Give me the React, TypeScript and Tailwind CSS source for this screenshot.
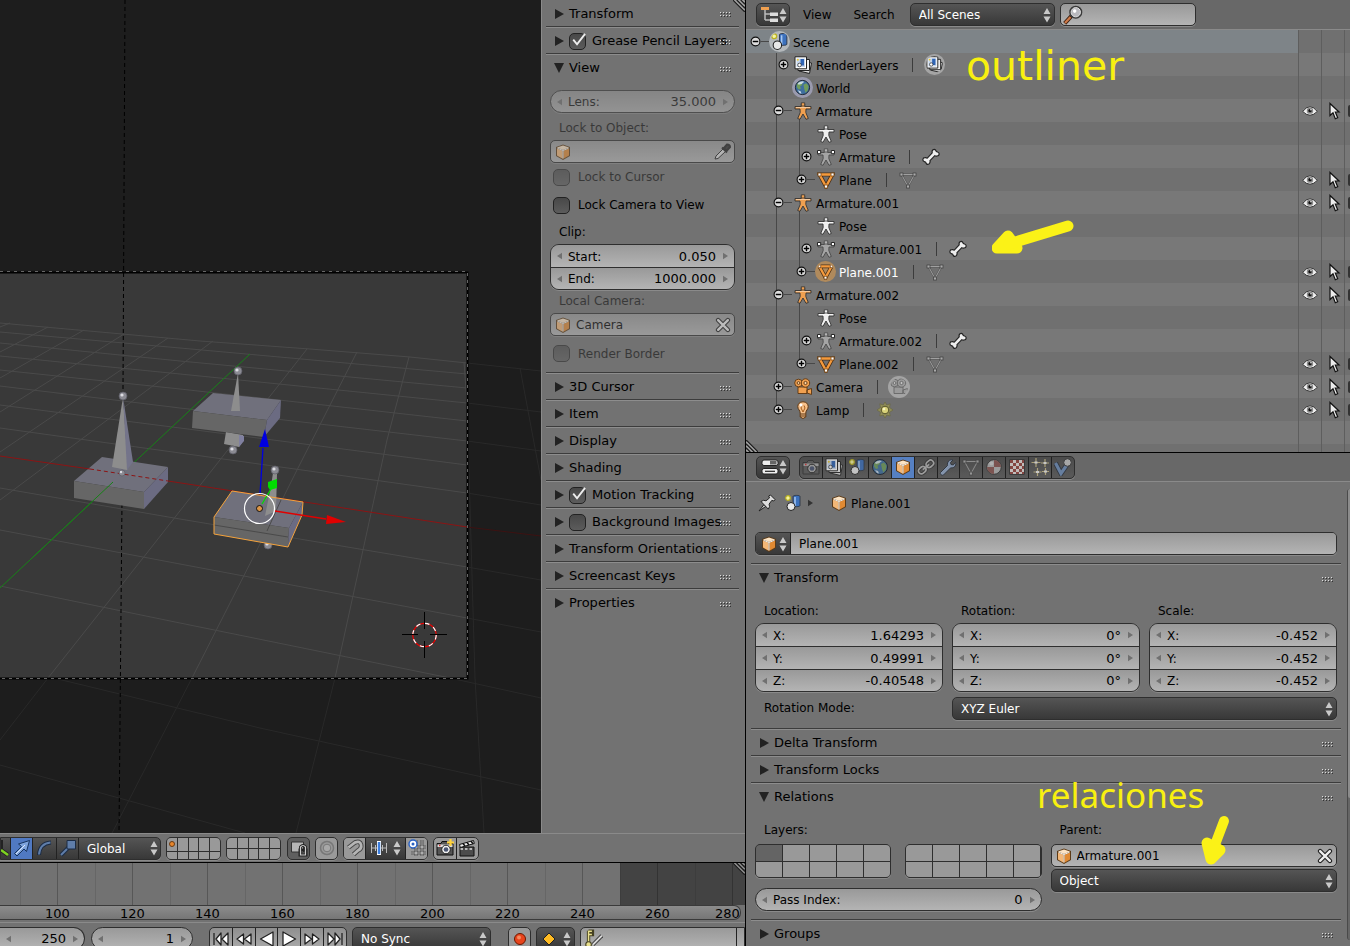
import type { ReactNode } from "react";
import clsx from "clsx";

/* ---------- icons ---------- */

const Icon = ({ children, className = "w-[18px] h-[18px]" }: { children: ReactNode; className?: string }) => (
  <svg viewBox="0 0 18 18" className={clsx("shrink-0", className)} aria-hidden="true">
    {children}
  </svg>
);

const Cube = () => (
  <Icon>
    <path d="M9 1.500 16 4v9l-7 4-7-4V4z" fill="#5b3a17" />
    <path d="M9 2.500 15 4.600 9 7 3 4.600z" fill="#fbe3c4" />
    <path d="M3 5.400 8.600 7.800v8L3 12.600z" fill="#f3b777" />
    <path d="M15 5.400 9.400 7.800v8l5.600-3.200z" fill="#e08a33" />
    <path d="M3.400 5.200 9 7.500l5.600-2.300M9 7.500v8" fill="none" stroke="#fff" strokeWidth=".9" />
  </Icon>
);

const SceneIcon = ({ halo }: { halo?: boolean }) => (
  <Icon className={halo ? "w-[21px] h-[21px] rounded-full bg-[#b4b8bb] p-[1px]" : "w-[18px] h-[18px]"}>
    <path d="M9 2.500c0-1.500 7-1.500 7 0v9c0 1.500-7 1.500-7 0z" fill="#3c71bd" stroke="#26303f" strokeWidth=".8" />
    <path d="M11 3v9" stroke="#a8c8f2" strokeWidth="1.500" />
    <circle cx="7" cy="12.500" r="4" fill="#e8e8e8" stroke="#222" />
    <circle cx="4" cy="4" r="2.300" fill="#f5f3a0" stroke="#b9b11f" strokeWidth="1.200" />
  </Icon>
);

const LayersIcon = ({ halo }: { halo?: boolean }) => (
  <Icon className={halo ? "w-[21px] h-[21px] rounded-full bg-[#a5a5a5] p-[2px]" : "w-[18px] h-[18px]"}>
    <path d="m7 5 10.500 2-2 10.500L5 15z" fill="#d9d9d9" stroke="#222" />
    <path d="M4 3.500h11.500v11H4z" fill="#eee" stroke="#222" />
    <path d="M1 .8h11.500v12H1z" fill="#fff" stroke="#222" />
    <path d="M2.500 2.500h8.500v8.500H2.500z" fill="#c6d6ec" />
    <path d="M6.500 3H10v6.500H6.500z" fill="#2f64b5" />
    <circle cx="5.500" cy="9" r="1.800" fill="#fff" stroke="#222" strokeWidth=".7" />
    <circle cx="3.800" cy="3.800" r="1" fill="#ecc82c" />
  </Icon>
);

const WorldIcon = ({ halo }: { halo?: boolean }) => (
  <Icon className={halo ? "w-[21px] h-[21px] rounded-full bg-[#9a9aae] p-[2px]" : "w-[18px] h-[18px]"}>
    <circle cx="9" cy="9" r="7.500" fill="#3f6f9f" stroke="#16202c" />
    <path d="M3 5.500 6 3l3 .8-.5 2.700-2 1.200.8 2.500-2.300.8L3 8.500zM10 6l3-1.500 2.500 3-.8 4.500-2.400 2.500L11 11z" fill="#6f9c5c" />
    <path d="M4 4.500Q7.500 1.500 11 3l-3 2.300-3.200.8zM4 12l3 1 1 2.500-2-.5z" fill="#dbe8f3" opacity=".85" />
  </Icon>
);

const figure = "M7.300 2h3.400v2.500H17v2.500h-5L11.800 10.500l2.500 6-2.300.8L9 12l-3 5.300-2.300-.8 2.500-6L6 7H1V4.500h6.300z";
const Man = ({ color = "#f0a050" }: { color?: string }) => (
  <Icon>
    <path d={figure} fill={color} stroke="#333" strokeWidth=".9" />
    <path d="M7.300.8h3.400V4H7.300z" fill={color} stroke="#333" strokeWidth=".8" />
    <path d="M2 5.400h14" stroke="#fff" strokeWidth=".8" opacity=".6" />
  </Icon>
);
const Rig = () => (
  <Icon>
    <path d={figure} fill="#a4a4a4" stroke="#4a4a4a" strokeWidth=".9" />
    <path d="M7.300.8h3.400V4H7.300z" fill="#b5b5b5" stroke="#4a4a4a" strokeWidth=".8" />
    <path d="M.5 2.500h3.200v3.200H.5zM14.300 2.500h3.200v3.200h-3.200z" fill="#fff" stroke="#222" />
  </Icon>
);

const Mesh = ({ tone = "orange" }: { tone?: "orange" | "active" | "grey" }) => {
  const grey = tone === "grey";
  return (
    <Icon className={tone === "active" ? "w-[21px] h-[21px] rounded-full bg-[#b08a5c] p-[2px]" : "w-[18px] h-[18px]"}>
      <path d="M2.500 3.500h13L9 15.500z" fill="none" stroke={grey ? "#555" : "#4a3018"} strokeWidth={grey ? 2 : 4} />
      <path d="M2.500 3.500h13L9 15.500z" fill="none" stroke={grey ? "#a0a0a0" : "#f59a3c"} strokeWidth={grey ? 1 : 2.4} />
      {[[2.5, 3.5], [15.5, 3.5], [9, 15.5]].map(([x, y]) => (
        <rect key={`${x}-${y}`} x={x - 1.5} y={y - 1.5} width="3" height="3" fill={grey ? "#aaa" : "#fff"} stroke={grey ? "#444" : "#7a4a18"} strokeWidth=".8" />
      ))}
    </Icon>
  );
};

const Bone = () => (
  <Icon>
    <path d="M10.200 4.800C9.500 2.300 12 .3 13.500 2c.4 1 .8 1.800 2 2 2.400.6 2.200 3.800-.4 4-1 .2-1.700 0-2.300-.3L8 12.600c.6 2.700-1.800 4.900-3.600 3.200-.3-1.200-.9-1.900-2-2.100-2.300-.7-2-3.900.6-4 .9-.1 1.600.1 2.300.4z" fill="#eee" stroke="#222" strokeWidth="1.200" />
  </Icon>
);

const MovieCam = ({ halo }: { halo?: boolean }) => {
  const fill = halo ? "#9a9a9a" : "#f0a050";
  return (
    <Icon className={halo ? "w-[22px] h-[22px] rounded-full bg-[#a4a4a4] p-[2px]" : "w-[18px] h-[18px]"}>
      <g fill={fill} stroke={halo ? "#666" : "#5c3510"} strokeWidth=".9">
        <path d="M4 9h9v6.500H4zM13 12l4.500-1.500v6L13 15z" />
        <circle cx="4.500" cy="5" r="3.800" />
        <circle cx="11.500" cy="5" r="4.200" />
        <circle cx="11.500" cy="5" r="1.600" fill={halo ? "#c4c4c4" : "#fbd6a8"} />
        <circle cx="4.500" cy="5" r="1.400" fill={halo ? "#c4c4c4" : "#fbd6a8"} />
      </g>
    </Icon>
  );
};

const Bulb = () => (
  <Icon>
    <path d="M9 .8c3.500 0 5.200 2.300 5.200 4.800 0 3-2.400 3.600-2.400 6.400v4L9 17.500 6.200 16v-4c0-2.800-2.400-3.400-2.400-6.400C3.800 3.100 5.500.8 9 .8z" fill="#f6c08a" stroke="#5c3510" />
    <path d="M8 4.500 7 7l2 4 2-4-1-2.500" stroke="#a65c18" fill="none" />
    <path d="M6.500 13h5M6.500 15h5" stroke="#5c3510" strokeWidth="1.200" />
    <circle cx="7" cy="4" r="1.500" fill="#fff" />
  </Icon>
);

const Sun = () => (
  <Icon>
    <path d="m9 1 1.700 3 3.500-1.200L13.500 6.500 17 9l-3.500 2.300.7 3.700-3.500-1L9 17l-1.700-3-3.500 1 .7-3.700L1 9l3.500-2.500-.7-3.700L7.300 4z" fill="#8f8c58" stroke="#66643e" strokeWidth=".6" />
    <circle cx="9" cy="9" r="3.800" fill="#d8d27a" stroke="#55532c" />
    <circle cx="8" cy="8" r="1.300" fill="#f5f2c0" />
  </Icon>
);

const Eye = () => (
  <Icon className="w-[16px] h-[16px]">
    <path d="M.8 9.500Q9-1 17.200 9.500 9 18 .8 9.500z" fill="#f0f0f0" stroke="#222" />
    <circle cx="9" cy="8.600" r="3.600" fill="#8a8a8a" />
    <circle cx="9" cy="8.600" r="1.900" fill="#111" />
    <circle cx="10" cy="7.500" r=".8" fill="#fff" />
  </Icon>
);

const Pointer = () => (
  <Icon>
    <path d="M6 1.500v12l3-2.800 2.300 6 2.400-1-2.400-5.700H15z" fill="#ececec" stroke="#111" strokeWidth="1.200" />
  </Icon>
);

const StillCam = ({ plus }: { plus?: boolean }) => (
  <Icon>
    <path d="M1 4.500h4l1-2h5l1 2h5V16H1z" fill={plus ? "#555" : "#5c5c5c"} stroke={plus ? "#111" : "#333"} />
    <path d="M1.500 5.500h15V8h-15z" fill={plus ? "#ddd" : "#aaa"} />
    <circle cx="10" cy="10.500" r="4.300" fill={plus ? "#eee" : "#aaa"} stroke="#222" />
    <circle cx="10" cy="10.500" r="2.300" fill="#4a5572" />
    <path d="M3 6.500h1.500" stroke="#d33" strokeWidth="1.500" />
    {plus && <path d="M14.500 0v7M11 3.500h7" stroke="#ffd23c" strokeWidth="2.200" />}
  </Icon>
);

const Chain = () => (
  <Icon>
    <g fill="none" transform="rotate(-40 9 9)">
      <g stroke="#333" strokeWidth="3.600"><rect x="0" y="6" width="8" height="6" rx="3" /><rect x="10" y="6" width="8" height="6" rx="3" /></g>
      <g stroke="#b4b4b4" strokeWidth="1.700"><rect x="0" y="6" width="8" height="6" rx="3" /><rect x="10" y="6" width="8" height="6" rx="3" /><path d="M5 9h8" /></g>
    </g>
  </Icon>
);

const Wrench = () => (
  <Icon>
    <path d="M1.500 14.500 8.500 7.500C7.800 4 10.500 1 14 2l-2.500 2.500.5 2 2.200.4L16.700 4.500c.8 3.500-2 6-5 5.300L4.500 17c-1.500 1-4-1-3-2.500z" fill="#93a8c8" stroke="#28303c" />
  </Icon>
);

const Ball = () => (
  <Icon>
    <circle cx="9" cy="9" r="7.300" fill="#b4b4b4" stroke="#333" />
    <path d="M9 9V2a7 7 0 0 1 7 7zM9 9v7a7 7 0 0 1-7-7z" fill="#8a5550" />
    <circle cx="6.500" cy="5.500" r="2" fill="#ddd" opacity=".7" />
  </Icon>
);

const Checker = () => (
  <Icon>
    <path d="M1.500 1.500h15v15h-15z" fill="#e6dfdc" stroke="#333" />
    <path d="M2 2h3v3H2zM8 2h3v3H8zM14 2h2v3h-2zM5 5h3v3H5zM11 5h3v3h-3zM2 8h3v3H2zM8 8h3v3H8zM14 8h2v3h-2zM5 11h3v3H5zM11 11h3v3h-3zM2 14h3v2H2zM8 14h3v2H8zM14 14h2v2h-2z" fill="#96423c" />
  </Icon>
);

const Sparkles = () => (
  <Icon>
    <path d="M5 0v9M.5 4.500h9M14 1v8M10 5h8M6.500 10v8M2.500 14h8M14.500 10v7M11 13.500h7" stroke="#c8bb86" strokeWidth="1.200" />
    <path d="M3.500 4.500h3M12.500 5h3M5 14h3M13 13.500h3" stroke="#eee" strokeWidth="2" />
  </Icon>
);

const Physics = () => (
  <Icon>
    <path d="M1.500 5 7 15.500 13.500 6" fill="none" stroke="#28303c" strokeWidth="5" />
    <path d="M1.500 5 7 15.500 13.500 6" fill="none" stroke="#6d8cb8" strokeWidth="3.200" />
    <circle cx="13.500" cy="4.500" r="3.800" fill="#c4c4c4" stroke="#333" />
  </Icon>
);

const Pin = () => (
  <Icon>
    <path d="M1 17 6 10.500l2 1.800z" fill="#ccc" stroke="#222" />
    <path d="M3 7.500Q5.500 5.500 8 6.800L11.500 4l-.8-2L12.500 1 17 5.500 15.800 7l-2-.6-2.700 3.700q1.300 2.600-.8 5z" fill="#ddd" stroke="#222" />
  </Icon>
);

const CloseX = () => (
  <Icon className="w-[16px] h-[16px]">
    <path d="m3.500 3.500 11 11m0-11-11 11" stroke="#222" strokeWidth="5" strokeLinecap="round" />
    <path d="m3.500 3.500 11 11m0-11-11 11" stroke="#eee" strokeWidth="2.600" strokeLinecap="round" />
  </Icon>
);

const Dropper = () => (
  <Icon>
    <path d="m2 16 1-3 7-7 2.500 2.500-7.500 7z" fill="#ddd" stroke="#222" />
    <path d="m9 4.500 5 5M11 5l3-3.500q3 0 3 2.500l-3.500 4z" stroke="#222" strokeWidth="2" fill="#333" />
  </Icon>
);

const Magnifier = () => (
  <Icon className="w-[20px] h-[20px]">
    <path d="m1.500 16.500 6-6.500" stroke="#3a1f10" strokeWidth="3.600" />
    <path d="m1.800 16.200 5-5.500" stroke="#d07a48" strokeWidth="2" />
    <circle cx="11.500" cy="6.500" r="5" fill="#b9b9be" stroke="#3a3a3a" strokeWidth="1.800" />
    <circle cx="11.500" cy="6.500" r="4.200" fill="none" stroke="#e4e4e4" strokeWidth=".9" />
    <circle cx="10.500" cy="5.500" r="1.600" fill="#fff" />
  </Icon>
);

const UpDown = () => (
  <svg viewBox="0 0 8 16" className="w-[8px] h-[16px] shrink-0" aria-hidden="true">
    <path d="M4 1 7.500 7h-7zM4 15.500 7.500 9.500h-7z" fill="#c9c9c9" />
  </svg>
);

const Nudge = ({ flip, dark }: { flip?: boolean; dark?: boolean }) => (
  <svg viewBox="0 0 6 8" className="w-[5px] h-[8px] shrink-0" aria-hidden="true">
    <path d={flip ? "M0 0 6 4 0 8z" : "M6 0 0 4l6 4z"} fill={dark ? "#333" : "#707070"} />
  </svg>
);

const Grip = ({ className }: { className?: string }) => (
  <svg viewBox="0 0 12 12" className={clsx("w-[12px] h-[12px]", className)} aria-hidden="true">
    <path d="M0 0 12 12M4 0l8 8M8 0l4 4" stroke="#222" strokeWidth="1.500" />
    <path d="M1.500 0 12 10.500M5.500 0 12 6.500M9.500 0 12 2.500" stroke="#ccc" />
  </svg>
);

/* ---------- form parts ---------- */

const lightFill = "bg-linear-to-b from-[#999] to-[#b4b4b4]";
const darkFill = "bg-linear-to-b from-[#555] to-[#383838] text-white";
const edge = "border border-[#2e2e2e] shadow-[0_1px_0_#8a8a8a]";

type NumProps = { label?: string; value: string; height?: string; className?: string; disabled?: boolean };

const Num = ({ label, value, height = "h-[23px]", className, disabled }: NumProps) => (
  <label className={clsx("flex items-center px-[6px] w-full", height, lightFill, className, disabled && "opacity-50")}>
    <Nudge />
    <span className="ml-[6px] pt-px">{label}</span>
    <input defaultValue={value} disabled={disabled} aria-label={label ? undefined : "Frame"} className="flex-1 min-w-0 w-0 bg-transparent text-right text-[13px] outline-none mr-[7px] pt-px" />
    <Nudge flip />
  </label>
);

const NumStack = ({ rows }: { rows: string[][] }) => (
  <div className={clsx("rounded-[9px] overflow-hidden h-fit", edge)}>
    {rows.map(([label, value], i) => {
      const last = i === rows.length - 1;
      return <Num key={label} label={label} value={value} height={last ? "h-[21px]" : "h-[23px]"} className={last ? "" : "border-b border-[#2e2e2e]"} />;
    })}
  </div>
);

const Select = ({ label, value, className }: { label: string; value: string; className?: string }) => (
  <div className={clsx("flex items-center h-[23px]", darkFill, edge, className)}>
    <select aria-label={label} className="appearance-none bg-transparent outline-none flex-1 min-w-0 h-full pl-[8px] pt-px">
      <option>{value}</option>
    </select>
    <span className="mr-[3px] pointer-events-none"><UpDown /></span>
  </div>
);

const IdField = ({ label, value, disabled, action }: { label: string; value?: string; disabled?: boolean; action: ReactNode }) => (
  <div className={clsx("flex items-center h-[23px] rounded-[5px] px-[3px]", lightFill, edge, disabled && "opacity-60")}>
    <Cube />
    <input aria-label={label} defaultValue={value} disabled={disabled} className="flex-1 min-w-0 bg-transparent outline-none ml-[4px] pt-px" />
    <button aria-label={`${label} action`}>{action}</button>
  </div>
);

const Check = ({ label, checked, disabled, heading, className }: { label: string; checked?: boolean; disabled?: boolean; heading?: boolean; className?: string }) => (
  <label className={clsx("flex items-center whitespace-nowrap", disabled && "opacity-50", className)}>
    <span className="relative w-[17px] h-[17px]">
      <input type="checkbox" defaultChecked={checked} disabled={disabled} className="block appearance-none w-[17px] h-[17px] rounded-[5px] border border-[#222] bg-linear-to-b from-[#484848] to-[#5c5c5c]" />
      {checked && (
        <svg viewBox="0 0 18 18" className="absolute inset-0 pointer-events-none overflow-visible" aria-hidden="true">
          <path d="m4.500 7 4 5L17 1" fill="none" stroke="#eee" strokeWidth="2" />
        </svg>
      )}
    </span>
    <span className={heading ? "ml-[6px]" : "ml-[8px]"}>{label}</span>
  </label>
);

const Dots = () => (
  <svg viewBox="0 0 12 6" className="w-[12px] h-[6px] shrink-0" aria-hidden="true">
    {[0, 3, 6, 9].map((x) => (
      <g key={x}>
        <path d={`M${x} 0h1v1h-1zM${x} 3h1v1h-1z`} fill="#ddd" />
        <path d={`M${x + 1} 1h1v1h-1zM${x + 1} 4h1v1h-1z`} fill="#333" />
      </g>
    ))}
  </svg>
);

type PanelProps = { title: string; open?: boolean; first?: boolean; check?: boolean; children?: ReactNode };

const Panel = ({ title, open, first, check, children }: PanelProps) => (
  <section className={first ? "" : "border-t border-[#3c3c3c]"}>
    <div className={clsx("flex items-center h-[26px] pl-[8px] pr-[7px] pt-px text-[13px]", !first && "border-t border-t-[#8d8d8d]")}>
      <button className="flex items-center flex-none" aria-expanded={!!open} aria-label={check === undefined ? undefined : title}>
        <svg viewBox="0 0 11 10" className="w-[11px] h-[10px] mr-[4px]" aria-hidden="true">
          <path d={open ? "M0 0h10L5 10z" : "M1 0v10l9-5z"} fill="#222" />
        </svg>
        {check === undefined && title}
      </button>
      {check !== undefined && <Check label={title} checked={check} heading />}
      <span className="flex-1" />
      <span className="w-0 flex justify-end pt-[3px]"><Dots /></span>
    </div>
    {children}
  </section>
);

/* ---------- 3D view ---------- */

const gridLines = [
  "M0 323 200 341 310 349 410 357 467 363", "M0 332 180 348 467 374", "M0 343 180 361 467 388", "M0 356 180 374 467 403",
  "M0 370 180 389 467 421", "M0 386 180 408 467 441", "M0 405 180 428 467 465", "M0 428 180 453 467 493",
  "M0 488 180 519 467 567", "M0 530 180 564 467 618", "M0 586 180 623 450 678",
  "M10 323 0 327", "M48 327 0 352", "M84 330 0 378", "M124 334 0 412", "M168 338 0 452", "M213 341 0 500",
  "M307 349 227 451 143 558 48 678", "M357 352 298 468 262 540 192 678", "M409 357 387 440 363 550 335 678", "M464 362 467 403",
];
const outerLines = [
  "M467 363 541 371M467 403l74 9M467 441l74 10M467 493l74 12M467 567l74 13M467 618l74 14M450 678l91 20",
  "M0 665 260 728 541 790M0 765 245 833M192 678 112 833M335 678 296 833M467 403 475 678 484 833M48 678 0 740M520 368 541 480",
];

const Joint = ({ x, y, r = 4 }: { x: number; y: number; r?: number }) => (
  <g>
    <circle cx={x} cy={y} r={r} fill="#8b8b93" stroke="#5c5c66" strokeWidth=".7" />
    <circle cx={x - 1} cy={y - 1} r={r / 2.5} fill="#dcdce2" />
  </g>
);

const Viewport = () => (
  <svg viewBox="0 0 541 833" preserveAspectRatio="xMinYMin slice" className="w-full h-full block" role="img" aria-label="3D view">
    <path d="M0 0h541v833H0z" fill="#1d1d1d" />
    <g fill="none" stroke="#292929">{outerLines.map((d) => <path key={d} d={d} />)}</g>
    <path d="m467 527 74 9" stroke="#3d1212" />
    <path d="M0 272h467v406H0z" fill="#393939" />
    <g fill="none" stroke="#4a4a4a">{gridLines.map((d) => <path key={d} d={d} />)}</g>
    <path d="M250 354 0 588" stroke="#178217" fill="none" />
    <path d="M125 0 123 390 119 833" fill="none" stroke="#000" strokeDasharray="4 3" />
    <path d="M0 272.500h467.500v406H0" fill="none" stroke="#000" strokeWidth="2" />
    <path d="M0 271.500h467.500v407H0" fill="none" stroke="#666" strokeDasharray="3 4" />

    {/* box on the left */}
    <path d="m102 457 66 10-24 25-70-11z" fill="#70707c" />
    <path d="m74 481 70 11v17l-70-11z" fill="#666" />
    <path d="m168 467v15l-24 27v-17z" fill="#6b6b82" />
    <path d="m123 397-11 70 15 3 1-2z" fill="#8d8d8d" />
    <path d="m123 397 10 65-6 8z" fill="#74748a" />
    <path d="M113 482 31 559" stroke="#178217" />
    <Joint x={123} y={396} />
    <path d="M0 456 90 469" stroke="#8c1414" />
    <path d="m90 469 78 12" stroke="#8c1414" strokeDasharray="4 3" />
    <path d="m168 481 299 46" stroke="#8c1414" />
    <Joint x={122} y={473} r={3} />

    {/* box at the back */}
    <path d="m226 432 17 3v6l-4 6-15-3z" fill="#8d8d8d" />
    <path d="m239 435 5 1v5l-5 6z" fill="#8080a0" />
    <Joint x={233} y={450} />
    <path d="m213 393 68 7-14 20-74-9z" fill="#70707c" />
    <path d="m193 411 74 9-3 17-72-9z" fill="#666" />
    <path d="m281 400-1 18-16 19 3-17z" fill="#6b6b82" />
    <path d="m238 373-7 38h9z" fill="#8d8d8d" />
    <Joint x={238} y={371} />

    {/* selected box */}
    <Joint x={268} y={545} />
    <path d="m232 491 71 11-14 26-75-11z" fill="#70707c" />
    <path d="m214 517 75 11-1 19-74-13z" fill="#666" />
    <path d="m303 502-1 13-14 32 1-19z" fill="#6b6b82" />
    <path d="m214 525 74 12M281 500l-14 31" stroke="#4a4a4a" fill="none" />
    <path d="m273 473 4 0-1 38-11 5 6-30z" fill="#8d8d8d" />
    <Joint x={275} y={470} />
    <path d="m232 491 71 11-1 13-14 32-74-13v-17z" fill="none" stroke="#f5a33c" />

    {/* manipulator */}
    <path d="m260 494 3-46" stroke="#0000e0" strokeWidth="1.300" />
    <path d="m265 429-6 18h10z" fill="#0000e0" />
    <path d="m262 504 9-15" stroke="#00dd00" strokeWidth="1.300" />
    <path d="m268 482 9-3v9l-7 2-2-3z" fill="#00dd00" />
    <path d="m275 511 51 8" stroke="#e00000" strokeWidth="1.300" />
    <path d="m327 515 19 7-20 2z" fill="#e00000" />
    <circle cx="259.500" cy="508.500" r="15" fill="none" stroke="#fff" strokeWidth="1.200" />
    <circle cx="259.500" cy="508.500" r="3" fill="#dc9646" stroke="#111" />

    {/* 3D cursor */}
    <circle cx="424.500" cy="635" r="11.700" fill="none" stroke="#e00" strokeWidth="1.200" />
    <circle cx="424.500" cy="635" r="11.700" fill="none" stroke="#fff" strokeWidth="1.200" strokeDasharray="4.600 4.600" />
    <path d="M402 634.500h16M430 634.500h17M424.500 612v17M424.500 641v17" stroke="#000" />
  </svg>
);

const ToolShelf = () => (
  <aside className="relative w-[204px] shrink-0 bg-[#727272] border-l border-[#8a8a8a] pl-[4px] pr-[6px] overflow-hidden">
    <Panel title="Transform" first />
    <Panel title="Grease Pencil Layers" check />
    <Panel title="View" open>
      <div className="px-[4px] pt-[10px] pb-[5px]">
        <Num label="Lens:" value="35.000" disabled className={clsx("rounded-full", edge)} />
        <p className="h-[23px] leading-[23px] mt-[4px] pl-[9px] opacity-50">Lock to Object:</p>
        <IdField label="Lock object" disabled action={<Dropper />} />
        <Check label="Lock to Cursor" disabled className="h-[28px] pl-[3px]" />
        <Check label="Lock Camera to View" className="h-[28px] pl-[3px]" />
        <p className="h-[23px] leading-[23px] mt-[2px] pl-[9px]">Clip:</p>
        <NumStack rows={[["Start:", "0.050"], ["End:", "1000.000"]]} />
        <p className="h-[23px] leading-[23px] pl-[9px] opacity-50">Local Camera:</p>
        <IdField label="Local camera" value="Camera" disabled action={<CloseX />} />
        <Check label="Render Border" disabled className="h-[27px] mt-[4px] pl-[3px]" />
      </div>
    </Panel>
    <Panel title="3D Cursor" />
    <Panel title="Item" />
    <Panel title="Display" />
    <Panel title="Shading" />
    <Panel title="Motion Tracking" check />
    <Panel title="Background Images" check={false} />
    <Panel title="Transform Orientations" />
    <Panel title="Screencast Keys" />
    <Panel title="Properties" />
    <Grip className="absolute top-0 right-0" />
  </aside>
);

const LayerGrid = ({ dot, active, small }: { dot?: boolean; active?: boolean; small?: boolean }) => (
  <div className={clsx("grid grid-cols-5 rounded-[5px] overflow-hidden bg-[#2e2e2e] gap-px", edge, small ? "w-[55px] h-[23px]" : "h-[34px] flex-1")}>
    {Array.from({ length: 10 }, (_, i) => (
      <button key={i} aria-label={`Layer ${i + 1}`} className={clsx("flex items-center justify-center", active && i === 0 ? "bg-[#646464]" : "bg-[#999]")}>
        {dot && i === 0 && <span className="w-[6px] h-[6px] rounded-full bg-[#e8862c] border border-[#6b3a10]" />}
      </button>
    ))}
  </div>
);

const tool = "flex items-center justify-center w-[23px] h-[23px] shrink-0";

const ViewHeader = () => (
  <div className="flex items-center h-[29px] border-t border-[#8a8a8a] bg-[#727272] overflow-hidden">
    <div className={clsx("flex rounded-r-[5px] overflow-hidden shrink-0 w-[161px]", edge, darkFill)}>
      <button aria-label="Manipulator" className="w-[9px] h-[21px] overflow-hidden">
        <svg viewBox="0 0 9 21" className="w-[9px] h-[21px]"><path d="M0 2v10l7 5" fill="none" stroke="#222" strokeWidth="4" /><path d="M0 12l7 5" fill="none" stroke="#7ed321" strokeWidth="2.500" /></svg>
      </button>
      <button aria-label="Translate" className="w-[23px] h-[21px] bg-[#5079c2] border-x border-[#222] flex justify-center items-center">
        <Icon><path d="m1.500 14.500 7-7-3-2.500L16.500 1.500 13.500 12.500 11 10l-7 7z" fill="#7ea3dc" stroke="#16335c" /><path d="m3 15 9-9" stroke="#dbe8fb" /></Icon>
      </button>
      <button aria-label="Rotate" className="w-[23px] h-[21px] flex justify-center items-center">
        <Icon><path d="M3 16Q3.500 4.500 15 3.500" fill="none" stroke="#1c2c44" strokeWidth="4" /><path d="M3 15.500Q4 4.500 14.500 3.500" fill="none" stroke="#5f7da9" strokeWidth="2" /></Icon>
      </button>
      <button aria-label="Scale" className="w-[23px] h-[21px] border-x border-[#222] flex justify-center items-center">
        <Icon><path d="m2 16 8-8" stroke="#1c2c44" strokeWidth="4" /><path d="m2 16 8-8" stroke="#5f7da9" strokeWidth="2" /><path d="M8 1.500h8.500V10H8z" fill="#5f7da9" stroke="#1c2c44" /></Icon>
      </button>
      <div className="flex flex-1 items-center h-[21px]">
        <select aria-label="Orientation" className="appearance-none bg-transparent outline-none flex-1 min-w-0 pl-[8px] pt-px"><option>Global</option></select>
        <span className="mr-[2px] pointer-events-none"><UpDown /></span>
      </div>
    </div>
    <div className="flex gap-[5px] ml-[5px] shrink-0">
      <LayerGrid small dot />
      <LayerGrid small />
    </div>
    <button aria-label="Lock layers" className={clsx(tool, edge, "ml-[6px] rounded-[5px] bg-[#5f5f5f]")}>
      <Icon><path d="M1.500 3h12v10h-12z" fill="#b5b5b5" stroke="#333" /><path d="M10.500 10.500V8q2.500-3 5 0v2.500M10 11h6v5h-6z" fill="none" stroke="#222" strokeWidth="3" /><path d="M10.500 10.500V8q2.500-3 5 0v8h-5z" fill="none" stroke="#ccc" strokeWidth="1.200" /></Icon>
    </button>
    <button aria-label="Proportional editing" className={clsx(tool, edge, "ml-[5px] rounded-[5px] bg-[#999]")}>
      <Icon><circle cx="9" cy="9" r="6.500" fill="none" stroke="#777" strokeWidth="1.500" /><circle cx="9" cy="9" r="3.800" fill="#a8a8a8" stroke="#777" /></Icon>
    </button>
    <div className={clsx("flex ml-[5px] rounded-[5px] overflow-hidden shrink-0 h-[23px] w-[85px]", edge)}>
      <button aria-label="Snap" className="w-[22px] bg-[#999] flex items-center justify-center border-r border-[#222]">
        <Icon><path d="M2.500 8.500 9 3.500q5-2 6 2t-3 6l-4.500 4" fill="none" stroke="#444" strokeWidth="4.600" /><path d="M2.500 8.500 9 3.500q5-2 6 2t-3 6l-4.500 4" fill="none" stroke="#b5b5b5" strokeWidth="2.800" /></Icon>
      </button>
      <button aria-label="Snap element" className={clsx("flex flex-1 items-center justify-between px-[4px]", darkFill)}>
        <Icon><path d="M1 9h16M1.500 4v10M5.500 6v6M12.500 6v6M16.500 4v10" stroke="#bbb" /><path d="M9 2v14" stroke="#fff" strokeWidth="4" /><path d="M9 3v12" stroke="#3b7ddd" strokeWidth="2.500" /></Icon>
        <UpDown />
      </button>
      <button aria-label="Snap target" className="w-[22px] bg-[#999] flex items-center justify-center border-l border-[#222]">
        <Icon><path d="M8 1v16M14 1v16M3 8h15M3 14h15" stroke="#222" strokeWidth="2.600" /><path d="M8 1v16M14 1v16M3 8h15M3 14h15" stroke="#ddd" /><circle cx="5" cy="5" r="4" fill="#fff" stroke="#2a62c4" strokeWidth="1.500" /><circle cx="5" cy="5" r="1.500" fill="#2a62c4" /></Icon>
      </button>
    </div>
    <div className={clsx("flex ml-[5px] rounded-[5px] overflow-hidden h-[23px] w-[46px] shrink-0 bg-[#999]", edge)}>
      <button aria-label="Render" className="flex flex-1 items-center justify-center border-r border-[#222]"><StillCam plus /></button>
      <button aria-label="Render animation" className="flex flex-1 items-center justify-center">
        <Icon><path d="M2 8h14v9H2z" fill="#4c4c4c" stroke="#111" /><path d="m1.500 5.500 14-4 .8 3-14 4z" fill="#eee" stroke="#111" /><path d="m5 4.500 2 2.500M9 3.500 11 6M13 2.300l2 2.500" stroke="#111" strokeWidth="1.500" /><path d="M2.500 10h13" stroke="#ddd" strokeWidth="1.500" strokeDasharray="2.500 2" /></Icon>
      </button>
    </div>
  </div>
);

/* ---------- timeline ---------- */

const frames = [100, 120, 140, 160, 180, 200, 220, 240, 260, 280];
const playIcons = [
  ["Jump to start", "M2 3v12M9 3 4 9l5 6zM16 3l-6 6 6 6z"],
  ["Previous keyframe", "M8.500 4 2 9l6.500 5zM16 4 9.500 9l6.500 5z"],
  ["Play reverse", "M15 2 2.500 9 15 16z"],
  ["Play", "M3 2l12.500 7L3 16z"],
  ["Next keyframe", "M2 4l6.500 5L2 14zM9.500 4 16 9l-6.500 5z"],
  ["Jump to end", "M16 3v12M9 3l5 6-5 6zM2 3l6 6-6 6z"],
];

const Timeline = () => (
  <div className="relative border-t border-black bg-[#727272] overflow-hidden">
    <div className="flex h-[42px] pl-[20px] overflow-hidden">
      {frames.map((f) => (
        <div key={f} className={clsx("flex w-[75px] shrink-0 border-l", f > 240 ? "bg-[#434343] border-[#3d3d3d]" : "border-[#666]")}>
          <div className={clsx("w-[37px] border-r", f > 240 ? "border-[#333]" : "border-[#575757]")} />
        </div>
      ))}
    </div>
    <div className="flex h-[15px] pl-[20px] mr-[4px] border-y border-r border-[#3a3a3a] rounded-r-[7px] bg-linear-to-b from-[#8c8c8c] to-[#767676] text-[13px]">
      {frames.map((f) => (
        <span key={f} className={clsx("shrink-0 text-center leading-[15px]", f === 280 ? "w-[65px]" : "w-[75px]")}>{f}</span>
      ))}
    </div>
    <Grip className="absolute top-0 right-0" />
    <div className="flex mt-[2px] h-[24px] pt-[4px] border-t border-[#8a8a8a] overflow-hidden">
      <Num value="250" className={clsx("max-w-[85px] rounded-r-full border-l-0", edge)} />
      <Num value="1" className={clsx("max-w-[102px] ml-[6px] rounded-full", edge)} />
      <div className={clsx("flex h-[23px] ml-[16px] w-[138px] rounded-[5px] overflow-hidden shrink-0 bg-linear-to-b from-[#8f8f8f] to-[#aaa]", edge)}>
        {playIcons.map(([name, d], i) => (
          <button key={name} aria-label={name} className={clsx("flex flex-1 items-center justify-center", i > 0 && "border-l border-[#222]")}>
            <Icon><path d={d} fill="#fff" stroke="#222" strokeWidth="1.300" strokeLinejoin="round" /></Icon>
          </button>
        ))}
      </div>
      <Select label="Sync mode" value="No Sync" className="ml-[5px] w-[139px] shrink-0 rounded-[5px]" />
      <button aria-label="Record" className={clsx(tool, edge, "ml-[17px] rounded-[5px] bg-[#999]")}>
        <Icon><circle cx="9" cy="9" r="5.500" fill="#e8441c" stroke="#6b1800" /><circle cx="8" cy="7.500" r="2" fill="#f58a60" /></Icon>
      </button>
      <button aria-label="Keyframe type" className={clsx("flex items-center justify-between px-[3px] h-[23px] w-[39px] shrink-0 ml-[5px] rounded-[5px]", darkFill, edge)}>
        <Icon><path d="m9 3 6 6-6 6-6-6z" fill="#ffbb22" stroke="#222" /></Icon>
        <UpDown />
      </button>
      <div className={clsx("flex items-center h-[23px] flex-1 min-w-0 ml-[5px] rounded-l-[5px]", lightFill, edge)}>
        <Icon className="w-[20px] h-[20px] ml-[2px]">
          <path d="M5 1.500v10M5 2h3.500v3H5" fill="none" stroke="#444022" strokeWidth="3" /><path d="M5 1.500v10M5 2h3M5 5h3" fill="none" stroke="#e8df8c" strokeWidth="1.300" />
          <circle cx="5" cy="14" r="2.500" fill="#e8df8c" stroke="#444022" />
          <path d="m9 14 8-8" stroke="#444" strokeWidth="3.500" /><path d="m9 14 8-8" stroke="#ddd" strokeWidth="1.500" />
        </Icon>
        <input aria-label="Keying set" className="flex-1 min-w-0 bg-transparent outline-none" />
        <span className="h-full w-[8px] border-l border-[#222]" />
      </div>
    </div>
  </div>
);

/* ---------- outliner ---------- */

type TreeRow = { level: 0 | 1 | 2; text: string; icon: ReactNode; extra?: ReactNode; sign?: "+" | "-"; near?: boolean; toggles?: boolean; tone?: string };

const armature = (suffix: string, active?: boolean): TreeRow[] => [
  { level: 1, text: `Armature${suffix}`, icon: <Man />, sign: "-", toggles: true },
  { level: 2, text: "Pose", icon: <Man color="#eee" /> },
  { level: 2, text: `Armature${suffix}`, icon: <Rig />, extra: <Bone />, sign: "+", near: true },
  { level: 2, text: `Plane${suffix}`, icon: <Mesh tone={active ? "active" : "orange"} />, extra: <Mesh tone="grey" />, sign: "+", toggles: true, tone: active ? "text-white" : "" },
];

const tree: TreeRow[] = [
  { level: 0, text: "Scene", icon: <SceneIcon halo />, sign: "-" },
  { level: 1, text: "RenderLayers", icon: <LayersIcon />, extra: <LayersIcon halo />, sign: "+", near: true },
  { level: 1, text: "World", icon: <WorldIcon halo /> },
  ...armature(""),
  ...armature(".001", true),
  ...armature(".002"),
  { level: 1, text: "Camera", icon: <MovieCam />, extra: <MovieCam halo />, sign: "+", toggles: true },
  { level: 1, text: "Lamp", icon: <Bulb />, extra: <Sun />, sign: "+", toggles: true },
];

const leads = ["w-[23px]", "w-[46px]", "w-[69px]"];

const Columns = ({ on }: { on?: boolean }) => (
  <div className="flex shrink-0 self-stretch">
    {[<Eye key="e" />, <Pointer key="p" />].map((icon, i) => (
      <div key={i} className="w-[23px] border-l border-[#5e5e5e] flex items-center justify-center">
        {on && <button aria-label={i ? "Selectable" : "Visible"}>{icon}</button>}
      </div>
    ))}
    <div className="w-[6px] border-l border-[#5e5e5e] flex items-center justify-end">
      {on && <span className="w-[2px] h-[12px] rounded-l-[2px] bg-[#333]" />}
    </div>
  </div>
);

const Outliner = () => (
  <div className="relative flex flex-col">
    <header className="flex items-center h-[30px] pl-[10px] bg-[#686868] border-b border-[#8a8a8a]">
      <button aria-label="Editor type" className={clsx("flex items-center justify-between h-[23px] w-[34px] pl-[4px] pr-[3px] rounded-[5px]", darkFill, edge)}>
        <Icon><path d="M2 2h3M4 3v11M4 8h5M4 14h5" stroke="#bbb" strokeWidth="1.500" fill="none" /><path d="M0 1h8v3H0z" fill="#f0a050" /><path d="M9 6.500h8v3.500H9zM9 12.500h8V16H9z" fill="#ddd" /></Icon>
        <UpDown />
      </button>
      <button className="ml-[13px] pt-px">View</button>
      <button className="ml-[22px] pt-px">Search</button>
      <Select label="Display mode" value="All Scenes" className="ml-[15px] w-[145px] rounded-[5px]" />
      <label className={clsx("flex items-center h-[23px] w-[136px] ml-[5px] pl-[2px] rounded-[5px]", lightFill, edge)}>
        <Magnifier />
        <input type="search" aria-label="Filter" className="flex-1 min-w-0 bg-transparent outline-none" />
      </label>
    </header>
    <div className="relative h-[422px] flex flex-col bg-[repeating-linear-gradient(#707070_0px,#707070_23px,#787878_23px,#787878_46px)]">
      {/* branch lines */}
      <span className="absolute left-[30px] top-[20px] h-[360px] w-px bg-[#484848]" />
      {["top-[88px]", "top-[180px]", "top-[272px]"].map((top) => (
        <span key={top} className={clsx("absolute left-[53px] h-[62px] w-px bg-[#484848]", top)} />
      ))}
      {tree.map((row, i) => (
        <div key={i} className="relative flex items-center h-[23px] shrink-0">
          <div className={clsx("flex flex-1 items-center h-full min-w-0", row.level === 0 && "bg-[#7e8488]")}>
            <span className={clsx("flex items-center justify-end shrink-0", leads[row.level])}>
              {row.sign && (
                <button aria-label={row.sign === "+" ? "Expand" : "Collapse"} className={row.near ? "mr-[3px]" : ""}>
                  <svg viewBox="0 0 12 12" className="w-[11px] h-[11px] block">
                    <circle cx="6" cy="6" r="4.800" fill="#ddd" stroke="#111" strokeWidth="1.200" />
                    <path d={row.sign === "+" ? "M3 6h6M6 3v6" : "M3 6h6"} stroke="#000" strokeWidth="1.600" />
                  </svg>
                </button>
              )}
              {row.sign && !row.near && <span className="w-[8px] h-px bg-[#484848]" />}
            </span>
            <span className="w-[21px] flex items-center justify-center shrink-0">{row.icon}</span>
            <span className={clsx("pl-[3px] pt-[2px]", row.tone)}>{row.text}</span>
            {row.extra && (
              <>
                <span className="w-px h-[14px] bg-[#3c3c3c] ml-[14px]" />
                <span className="w-[22px] ml-[10px] flex items-center justify-center">{row.extra}</span>
              </>
            )}
          </div>
          <Columns on={row.toggles} />
        </div>
      ))}
      <div className="flex flex-1 justify-end"><Columns /></div>
      <Grip className="absolute bottom-0 left-0 rotate-180" />
    </div>
    {/* notes drawn over the tree */}
    <span className="absolute left-[220px] top-[42px] text-[41px] leading-[48px] text-[#f8f010]">outliner</span>
    <svg viewBox="0 0 84 40" className="absolute left-[246px] top-[218px] w-[84px] h-[40px]" aria-hidden="true">
      <path d="m5 30 11-12 9 12z" fill="#fbf217" stroke="#fbf217" strokeWidth="11" strokeLinejoin="round" />
      <path d="M17 26 76 8" stroke="#fbf217" strokeWidth="11" strokeLinecap="round" />
    </svg>
  </div>
);

/* ---------- properties ---------- */

const tabs: [string, ReactNode][] = [
  ["Render", <StillCam />], ["Render layers", <LayersIcon />], ["Scene", <SceneIcon />], ["World", <WorldIcon />],
  ["Object", <Cube />], ["Constraints", <Chain />], ["Modifiers", <Wrench />], ["Data", <Mesh tone="grey" />],
  ["Material", <Ball />], ["Texture", <Checker />], ["Particles", <Sparkles />], ["Physics", <Physics />],
];

const xyz = (a: string, b: string, c: string) => [["X:", a], ["Y:", b], ["Z:", c]];

const Properties = () => (
  <div className="relative flex-1 min-h-0 overflow-hidden border-t border-black bg-[#727272]">
    <header className="flex items-center h-[29px] pl-[10px] bg-[#686868] border-b border-[#8a8a8a]">
      <button aria-label="Editor type" className={clsx("flex items-center justify-between h-[23px] w-[34px] pl-[4px] pr-[3px] rounded-[5px]", darkFill, edge)}>
        <Icon><rect x="1" y="2" width="16" height="5.500" rx="2" fill="#eee" stroke="#222" /><path d="M9 3h6.500v3.500H9z" fill="#666" /><rect x="1" y="10.500" width="16" height="5.500" rx="2" fill="#eee" stroke="#222" /><path d="M4 13.300h10" stroke="#222" strokeWidth="1.200" /></Icon>
        <UpDown />
      </button>
      <nav className={clsx("flex ml-[9px] h-[23px] w-[276px] rounded-[5px] overflow-hidden bg-linear-to-b from-[#4c4c4c] to-[#5a5a5a]", edge)}>
        {tabs.map(([name, icon], i) => (
          <button key={name} aria-label={name} className={clsx("flex flex-1 items-center justify-center", i > 0 && "border-l border-[#222]", name === "Object" && "bg-[#5680c2]")}>
            <span className={name === "Object" ? "" : "opacity-75"}>{icon}</span>
          </button>
        ))}
      </nav>
    </header>
    <div className="flex items-center h-[42px] pl-[12px]">
      <button aria-label="Pin"><Pin /></button>
      <span className="ml-[8px]"><SceneIcon /></span>
      <span className="ml-[6px] mr-[17px]"><Nudge flip dark /></span>
      <Cube />
      <span className="ml-[3px] pt-px">Plane.001</span>
    </div>
    <div className={clsx("flex mt-[8px] mb-[8px] ml-[9px] mr-[13px] h-[23px] rounded-[5px] overflow-hidden", edge)}>
      <button aria-label="Browse object" className={clsx("flex items-center justify-between w-[35px] pl-[4px] pr-[3px] border-r border-[#222]", darkFill)}><Cube /><UpDown /></button>
      <input aria-label="Object name" defaultValue="Plane.001" className={clsx("flex-1 min-w-0 pl-[8px] pt-px outline-none", lightFill)} />
    </div>
    <div className="ml-[5px] mr-[9px]">
      <Panel title="Transform" open>
        <div className="px-[4px] pt-[10px] pb-[8px] grid grid-cols-3 gap-x-[9px]">
          {["Location:", "Rotation:", "Scale:"].map((t) => <p key={t} className="h-[23px] leading-[23px] pl-[9px]">{t}</p>)}
          <NumStack rows={xyz("1.64293", "0.49991", "-0.40548")} />
          <NumStack rows={xyz("0°", "0°", "0°")} />
          <NumStack rows={xyz("-0.452", "-0.452", "-0.452")} />
          <p className="h-[23px] leading-[23px] mt-[5px] pl-[9px]">Rotation Mode:</p>
          <Select label="Rotation mode" value="XYZ Euler" className="col-span-2 mt-[5px] rounded-[5px]" />
        </div>
      </Panel>
      <Panel title="Delta Transform" />
      <Panel title="Transform Locks" />
      <Panel title="Relations" open>
        <div className="px-[4px] pt-[10px] pb-[8px] grid grid-cols-2 gap-x-[9px]">
          <div>
            <p className="h-[23px] leading-[23px] mb-[2px] pl-[9px]">Layers:</p>
            <div className="flex gap-[14px] mb-[10px]">
              <LayerGrid active />
              <LayerGrid />
            </div>
            <Num label="Pass Index:" value="0" className={clsx("rounded-full", edge)} />
          </div>
          <div>
            <p className="h-[23px] leading-[23px] mb-[2px] pl-[9px]">Parent:</p>
            <IdField label="Parent" value="Armature.001" action={<CloseX />} />
            <Select label="Parent type" value="Object" className="mt-[2px] rounded-[5px]" />
          </div>
        </div>
      </Panel>
      <Panel title="Groups" />
    </div>
    {/* scroll bar */}
    <span className="absolute right-0 top-[36px] bottom-[6px] w-[3px] rounded-l-[3px] border-l border-[#4a4a4a] bg-[#666]" />
    <span className="absolute right-0 top-[36px] h-[309px] w-[2px] rounded-l-[2px] bg-[#8c8c8c]" />
    {/* notes */}
    <span className="absolute left-[291px] top-[318px] text-[35px] leading-[48px] text-[#f8f010] font-['Noto_Sans']">relaciones</span>
    <svg viewBox="0 0 36 56" className="absolute left-[452px] top-[359px] w-[36px] h-[56px]" aria-hidden="true">
      <path d="m9 31 4 16 9-9z" fill="#fbf217" stroke="#fbf217" strokeWidth="11" strokeLinejoin="round" />
      <path d="M26 9 15 38" stroke="#fbf217" strokeWidth="10" strokeLinecap="round" />
    </svg>
  </div>
);

const App = () => {
  return (
    <main className="grid grid-cols-[minmax(0,745fr)_minmax(0,605fr)] h-screen overflow-hidden bg-[#727272] text-black text-[12px] font-['DejaVu_Sans',sans-serif]">
      <div className="flex flex-col min-h-0">
        <div className="flex flex-1 min-h-0">
          <div className="flex-1 min-w-0 min-h-0 overflow-hidden"><Viewport /></div>
          <ToolShelf />
        </div>
        <ViewHeader />
        <Timeline />
      </div>
      <div className="flex flex-col min-h-0 border-l border-black">
        <Outliner />
        <Properties />
      </div>
    </main>
  );
};

export default App;
